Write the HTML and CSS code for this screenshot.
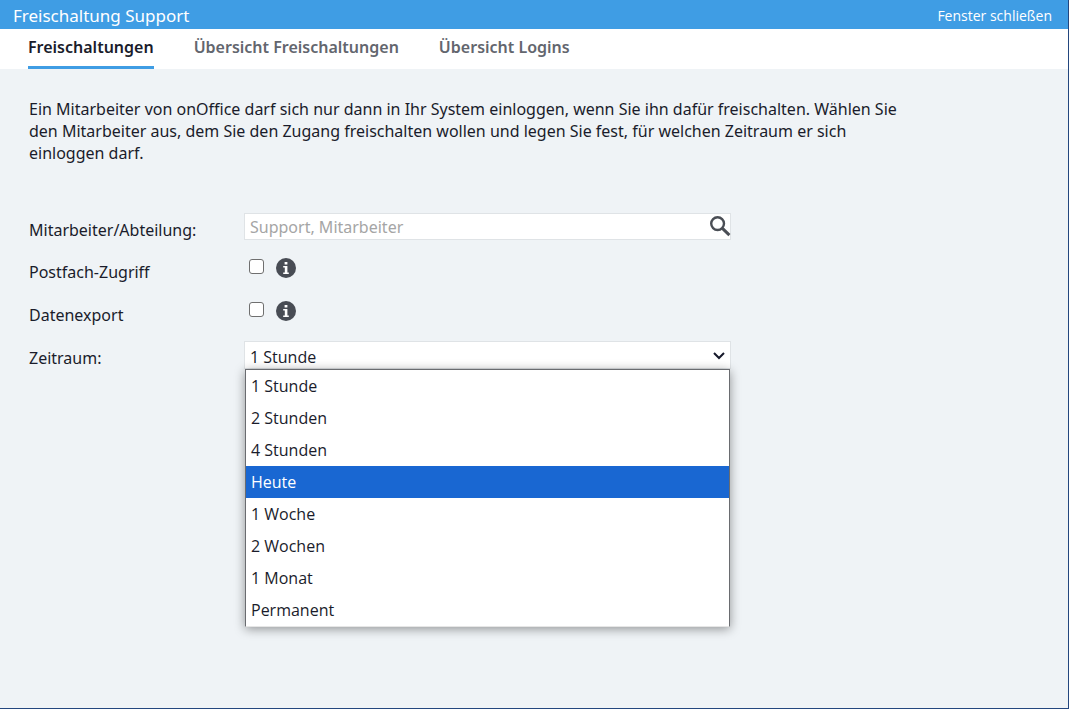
FILE: index.html
```html
<!DOCTYPE html>
<html lang="de">
<head>
<meta charset="utf-8">
<title>Freischaltung Support</title>
<link rel="stylesheet" href="styles.css">
</head>
<body>
<div class="window">
  <header class="titlebar">
    <h1 class="title">Freischaltung Support</h1>
    <button type="button" class="close">Fenster schließen</button>
  </header>
  <nav class="tabs">
    <a class="tab active" href="#freischaltungen">Freischaltungen</a>
    <a class="tab" href="#uebersicht">Übersicht Freischaltungen</a>
    <a class="tab" href="#logins">Übersicht Logins</a>
  </nav>
  <main class="content">
    <p class="intro">Ein Mitarbeiter von onOffice darf sich nur dann in Ihr System einloggen, wenn Sie ihn dafür freischalten. Wählen Sie den Mitarbeiter aus, dem Sie den Zugang freischalten wollen und legen Sie fest, für welchen Zeitraum er sich einloggen darf.</p>
    <form class="form">
      <label class="label" for="employee">Mitarbeiter/Abteilung:</label>
      <div class="field search">
        <input class="search-input" id="employee" type="text" placeholder="Support, Mitarbeiter">
        <button type="button" class="search-button" aria-label="Suchen">
          <svg width="21" height="21" viewBox="0 0 21 21"><circle cx="7.6" cy="7.6" r="6.4" fill="none" stroke="#4a4e55" stroke-width="2.4"/><path d="M12.4 12.4l7 6.8" stroke="#4a4e55" stroke-width="3"/></svg>
        </button>
      </div>
      <label class="label" for="mailbox">Postfach-Zugriff</label>
      <div class="field check">
        <input class="checkbox" id="mailbox" type="checkbox">
        <svg class="info" viewBox="0 0 20 20"><circle cx="10" cy="10" r="10" fill="#484c54"/><path d="M8.6 4h2.8v2.4H8.6zM7.2 8h4.2v6.4h1.4V16H7.2v-1.6h1.6V9.6H7.2z" fill="#fff"/></svg>
      </div>
      <label class="label" for="export">Datenexport</label>
      <div class="field check">
        <input class="checkbox" id="export" type="checkbox">
        <svg class="info" viewBox="0 0 20 20"><circle cx="10" cy="10" r="10" fill="#484c54"/><path d="M8.6 4h2.8v2.4H8.6zM7.2 8h4.2v6.4h1.4V16H7.2v-1.6h1.6V9.6H7.2z" fill="#fff"/></svg>
      </div>
      <label class="label" for="period">Zeitraum:</label>
      <div class="field period">
        <select class="select" id="period">
          <option>1 Stunde</option><option>2 Stunden</option><option>4 Stunden</option><option>Heute</option><option>1 Woche</option><option>2 Wochen</option><option>1 Monat</option><option>Permanent</option>
        </select>
        <svg class="chevron" viewBox="0 0 12 8"><path d="M1 1l5 5 5-5" fill="none" stroke="#15182a" stroke-width="2"/></svg>
        <ul class="menu" role="listbox" aria-label="Zeitraum">
          <li class="option" role="option">1 Stunde</li>
          <li class="option" role="option">2 Stunden</li>
          <li class="option" role="option">4 Stunden</li>
          <li class="option current" role="option" aria-selected="true">Heute</li>
          <li class="option" role="option">1 Woche</li>
          <li class="option" role="option">2 Wochen</li>
          <li class="option" role="option">1 Monat</li>
          <li class="option" role="option">Permanent</li>
        </ul>
      </div>
    </form>
  </main>
</div>
</body>
</html>
```
FILE: styles.css
```css
* { box-sizing: border-box; }
body {
  margin: 0;
  font: 16px/22px "Noto Sans", "Open Sans", sans-serif;
  color: #1a1c2b;
}
.window {
  display: flex;
  flex-direction: column;
  min-height: 100vh;
  background: #eff3f6;
  border: solid #23467e;
  border-width: 0 1px 1px 0;
}
.titlebar {
  display: flex;
  justify-content: space-between;
  align-items: center;
  height: 29px;
  padding: 2px 16px 0 13px;
  background: #3f9de4;
  color: #fff;
}
.title { margin: 0; font-size: 17px; font-weight: 400; }
.close {
  padding: 0;
  border: 0;
  background: none;
  color: #fff;
  font: 14px/22px "Open Sans", sans-serif;
}
.tabs {
  display: flex;
  gap: 40px;
  height: 40px;
  padding: 0 28px;
  background: #fff;
}
.tab {
  padding-top: 7px;
  color: #63666e;
  font-weight: 600;
  text-decoration: none;
}
.active { color: #1a1c2b; border-bottom: 3px solid #3f9de4; }
.content { padding: 29px; }
.intro { max-width: 880px; margin: 0 0 49px; }
.form {
  display: grid;
  grid-template-columns: 215px minmax(0, 487px);
  grid-template-rows: 42px 43px 43px auto;
}
.label { padding-top: 6px; }
.field { position: relative; }
.search-input {
  display: block;
  width: 100%;
  height: 27px;
  padding: 0 30px 0 5px;
  border: 1px solid #dfe3e6;
  background: #fff;
  font: 16px/22px "Noto Sans", "Open Sans", sans-serif;
}
.search-input::placeholder { color: #a5a5a5; }
.search-button {
  position: absolute;
  top: 3px;
  right: 0;
  display: flex;
  padding: 0;
  border: 0;
  background: none;
}
.check { display: flex; align-items: flex-start; gap: 12px; padding: 3px 0 0 5px; }
.checkbox {
  appearance: none;
  width: 15px;
  height: 15px;
  margin: 1px 0;
  border: 1px solid #6f6f6f;
  border-radius: 3px;
  background: #fff;
}
.info { width: 20px; height: 20px; }
.select {
  appearance: none;
  display: block;
  width: 100%;
  height: 28px;
  padding: 3px 30px 0 5px;
  border: 1px solid #dfe3e6;
  border-radius: 0;
  background: #fff;
  color: #1a1c2b;
  font: 16px/22px "Open Sans", sans-serif;
}
.chevron {
  position: absolute;
  top: 11px;
  right: 6px;
  width: 12px;
  height: 8px;
  pointer-events: none;
}
.menu {
  position: absolute;
  top: 28px;
  left: 1px;
  right: 1px;
  margin: 0;
  padding: 0;
  list-style: none;
  background: #fff;
  border: 1px solid #6a6c70;
  border-bottom-color: #e6e6e6;
  box-shadow: 0 2px 10px rgba(0, 0, 0, .4);
  font-family: "Open Sans", sans-serif;
}
.option { height: 32px; padding: 5px; }
.current { background: #1967d2; color: #fff; }
```
